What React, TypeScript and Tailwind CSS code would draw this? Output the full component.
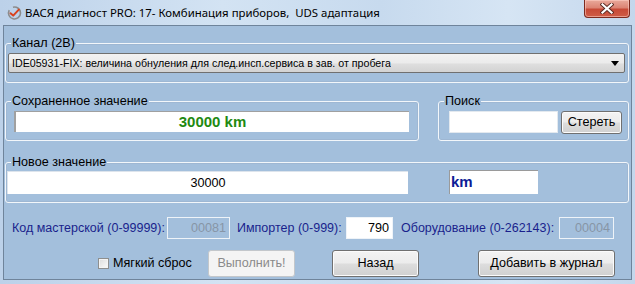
import React from "react";

const btnGrad =
  "bg-[linear-gradient(to_bottom,#f3f3f3_0%,#ececec_48%,#dddddd_52%,#d0d0d0_100%)]";

function Button({ w, children, disabled }: { w: string; children: React.ReactNode; disabled?: boolean }) {
  if (disabled) {
    return (
      <div
        className={`${w} h-[27px] shrink-0 flex items-center justify-center rounded-[3px] border border-[#c3c7cb] bg-[#f4f4f4] text-[12.6px] text-[#8a8a8a] whitespace-nowrap`}
      >
        {children}
      </div>
    );
  }
  return (
    <div
      className={`${w} h-[27px] shrink-0 flex items-center justify-center rounded-[3px] border border-[#707070] ${btnGrad} shadow-[inset_0_0_0_1px_#fbfbfb] text-[12.6px] text-black whitespace-nowrap`}
    >
      {children}
    </div>
  );
}

function TitleIcon() {
  return (
    <svg width="16" height="16" viewBox="0 0 16 16" className="shrink-0">
      <path d="M3.2 5.2 A6 6 0 1 0 7 2.2" fill="none" stroke="#8c8c8c" strokeWidth="1.6" />
      <path d="M4.5 8.2 L7.2 10.6 L12.8 4.6" fill="none" stroke="#d9421c" strokeWidth="2" strokeLinecap="round" strokeLinejoin="round" />
    </svg>
  );
}

function CloseButton() {
  return (
    <div className="w-[46px] h-[18px] rounded-b-[4px] border border-t-0 border-[#7c2a1f] bg-[linear-gradient(to_bottom,#e9a99b_0%,#dc8474_45%,#c74a37_55%,#cf5d47_100%)] shadow-[inset_0_0_0_1px_rgba(255,210,200,0.55)] flex items-center justify-center">
      <svg width="14" height="11" viewBox="0 0 14 11">
        <path d="M2.5 1.5 L11.5 9.5 M11.5 1.5 L2.5 9.5" stroke="#5a2a22" strokeWidth="4" strokeLinecap="square" />
        <path d="M2.5 1.5 L11.5 9.5 M11.5 1.5 L2.5 9.5" stroke="#ffffff" strokeWidth="2.2" strokeLinecap="square" />
      </svg>
    </div>
  );
}

function Legend({ children }: { children: React.ReactNode }) {
  return <legend className="ml-[5px] px-[1px] text-[12.6px] leading-[15px] text-black whitespace-nowrap">{children}</legend>;
}

export default function App() {
  return (
    <div className="w-[635px] h-[284px] flex flex-col font-['Liberation_Sans',Arial,sans-serif] bg-[linear-gradient(to_right,#bcd1e9_0%,#d3e3f3_35%,#c7daee_60%,#d6e5f4_80%,#c4d7ec_100%)] overflow-hidden">
      {/* Title bar */}
      <div className="h-[25px] flex items-start shrink-0">
        <div className="flex items-center h-[25px] pl-[6px] gap-[3px]">
          <TitleIcon />
          <span className="whitespace-pre text-[11.4px] text-black font-['Noto_Sans',sans-serif] leading-[16px]">
            {"ВАСЯ диагност PRO: 17- Комбинация приборов,  UDS адаптация"}
          </span>
        </div>
        <div className="ml-auto mr-[5px]">
          <CloseButton />
        </div>
      </div>

      {/* Body */}
      <div className="flex-1 flex px-[3px] pb-[4px] min-h-0">
        <div className="flex-1 flex flex-col border border-[#6f849b] bg-[#a3bfdc] pl-[1px] pr-[2px]">
          {/* Канал */}
          <fieldset className="mt-[10px] border border-[#f2f6fa] rounded-[3px] shadow-[inset_0_0_0_1px_rgba(150,170,195,0.35)]">
            <Legend>Канал (2В)</Legend>
            <div className="pl-[2px] pr-[3px] pt-[2px] pb-[9px]">
              <div className="h-[20px] flex items-center rounded-[2px] border border-[#707070] bg-[linear-gradient(to_bottom,#f2f2f2_0%,#ebebeb_50%,#dedede_55%,#d3d3d3_100%)] pl-[3px] pr-[5px]">
                <span className="text-[10.67px] text-black truncate">
                  IDE05931-FIX: величина обнуления для след.инсп.сервиса в зав. от пробега
                </span>
                <svg width="8" height="5" viewBox="0 0 8 5" className="ml-auto">
                  <path d="M0 0 H8 L4 5 Z" fill="#000" />
                </svg>
              </div>
            </div>
          </fieldset>

          {/* Сохраненное / Поиск */}
          <div className="flex mt-[11px]">
            <fieldset className="w-[414px] shrink-0 border border-[#f2f6fa] rounded-[3px] shadow-[inset_0_0_0_1px_rgba(150,170,195,0.35)]">
              <Legend>Сохраненное значение</Legend>
              <div className="pl-[8px] pt-[2px] pb-[8px]">
                <div className="w-[395px] h-[21px] bg-white border-l-2 border-t border-[#a0a0a0] flex items-center justify-center">
                  <span className="text-[15px] font-bold text-[#1f8a12]">30000 km</span>
                </div>
              </div>
            </fieldset>
            <fieldset className="ml-[19px] flex-1 border border-[#f2f6fa] rounded-[3px] shadow-[inset_0_0_0_1px_rgba(150,170,195,0.35)]">
              <Legend>Поиск</Legend>
              <div className="flex items-start pl-[10px] pt-[2px] pb-[6px] gap-[3px]">
                <div className="w-[109px] h-[22px] bg-white border border-[#e3e9ef]" />
                <div className={`w-[61px] h-[23px] flex items-center justify-center rounded-[3px] border border-[#707070] ${btnGrad} shadow-[inset_0_0_0_1px_#fbfbfb] text-[12.6px] text-black`}>
                  Стереть
                </div>
              </div>
            </fieldset>
          </div>

          {/* Новое значение */}
          <fieldset className="mt-[14px] border border-[#f2f6fa] rounded-[3px] shadow-[inset_0_0_0_1px_rgba(150,170,195,0.35)]">
            <Legend>Новое значение</Legend>
            <div className="flex items-start pl-[1px] pt-[1px] pb-[8px]">
              <div className="w-[401px] h-[23px] bg-white border-t border-l border-[#dde4ec] flex items-center justify-center">
                <span className="text-[12.6px] text-black">30000</span>
              </div>
              <div className="ml-[41px] w-[89px] h-[24px] -mt-[1px] bg-white border-t border-l border-[#9a9a9a] flex items-center pl-[1px]">
                <span className="text-[15px] font-bold text-[#0c1c96]">km</span>
              </div>
            </div>
          </fieldset>

          {/* Codes row */}
          <div className="mt-[14px] flex items-center pl-[7px] text-[12.5px] text-[#1a1f8c] whitespace-nowrap">
            <span className="shrink-0 w-[155px]">Код мастерской (0-99999):</span>
            <div className="shrink-0 w-[63px] h-[22px] border border-[#eef3f8] flex items-center justify-end pr-[3px] text-[12.6px] text-[#8795a6]">00081</div>
            <span className="ml-[7px] shrink-0 w-[109px]">Импортер (0-999):</span>
            <div className="shrink-0 w-[47px] h-[22px] bg-white border border-[#eef3f8] flex items-center justify-end pr-[3px] text-[12.6px] text-black">790</div>
            <span className="ml-[8px] shrink-0 w-[158px]">Оборудование (0-262143):</span>
            <div className="shrink-0 w-[55px] h-[22px] border border-[#eef3f8] flex items-center justify-end pr-[3px] text-[12.6px] text-[#8795a6]">00004</div>
          </div>

          {/* Buttons row */}
          <div className="mt-[11px] flex items-center pl-[93px]">
            <div className="w-[110px] shrink-0 flex items-center">
              <div className="w-[11px] h-[11px] border border-[#8e8f8f] bg-[linear-gradient(135deg,#dcdcdc,#fbfbfb)] shadow-[inset_0_0_0_1px_#f4f4f4]" />
              <span className="ml-[4px] text-[12.6px] text-black whitespace-nowrap">Мягкий сброс</span>
            </div>
            <Button w="w-[87px]" disabled>
              Выполнить!
            </Button>
            <div className="ml-[37px] shrink-0">
              <Button w="w-[87px]">Назад</Button>
            </div>
            <div className="ml-[59px] shrink-0">
              <Button w="w-[137px]">Добавить в журнал</Button>
            </div>
          </div>
        </div>
      </div>
    </div>
  );
}
